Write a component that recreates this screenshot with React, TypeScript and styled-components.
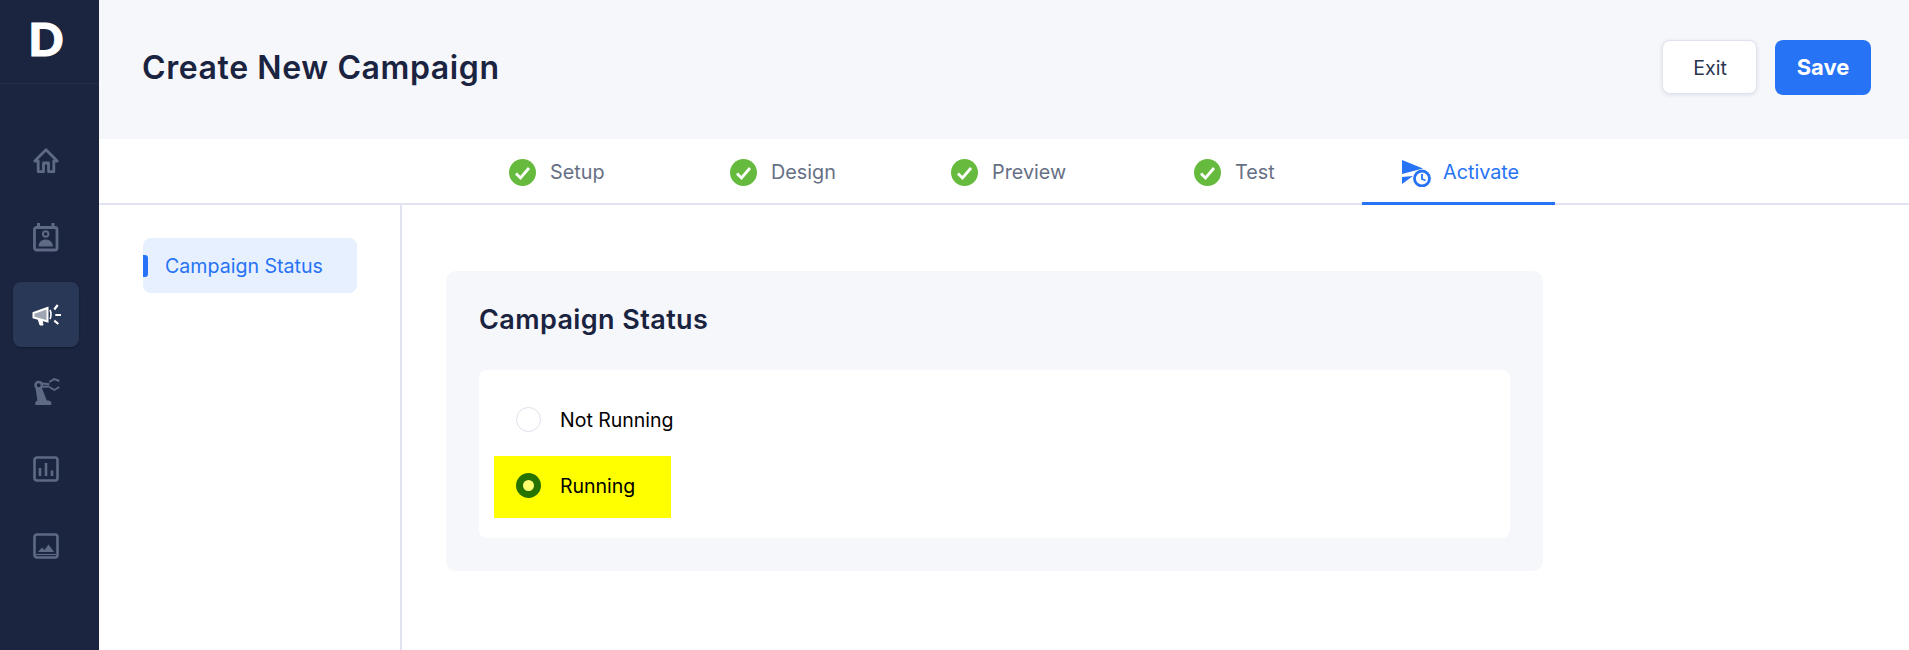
import React from 'react';
import styled, { createGlobalStyle } from 'styled-components';

const GlobalStyle = createGlobalStyle`
  html, body {
    margin: 0;
    padding: 0;
    height: 100%;
    background: #ffffff;
    font-family: Inter, "Liberation Sans", sans-serif;
  }
  #root {
    height: 100%;
  }
`;

const Page = styled.div`
  display: flex;
  height: 650px;
  overflow: hidden;
`;

const Sidebar = styled.aside`
  width: 99px;
  flex: none;
  display: flex;
  flex-direction: column;
  background-color: #1b2540;
`;

const LogoBox = styled.div`
  height: 83px;
  box-sizing: content-box;
  padding-right: 7px;
  display: flex;
  align-items: center;
  justify-content: center;
  border-bottom: 1px solid #222d4a;
`;

const Logo = styled.span`
  color: #ffffff;
  font-family: Lato, sans-serif;
  font-size: 46px;
  font-weight: 900;
  line-height: 1;
  margin-top: -5px;
  -webkit-text-stroke: 1.2px #ffffff;
`;

const SideNav = styled.nav`
  display: flex;
  flex-direction: column;
  align-items: flex-start;
  gap: 12px;
  padding: 44px 0 0 13px;
`;

const SideItem = styled.div<{ $active?: boolean }>`
  width: 66px;
  height: 65px;
  display: flex;
  align-items: center;
  justify-content: center;
  border-radius: 8px;
  color: ${(props) => (props.$active ? '#ffffff' : '#5e6984')};
  background-color: ${(props) => (props.$active ? '#2a3858' : 'transparent')};
  box-shadow: ${(props) => (props.$active ? '0 1px 2px rgba(10, 15, 35, 0.5)' : 'none')};
`;

const Main = styled.div`
  flex: 1;
  min-width: 0;
  display: flex;
  flex-direction: column;
`;

const TopBar = styled.header`
  height: 139px;
  flex: none;
  box-sizing: border-box;
  padding: 0 38px 5px 43px;
  display: flex;
  align-items: center;
  justify-content: space-between;
  background-color: #f6f7fb;
`;

const Title = styled.h1`
  margin: 0;
  color: #1a2340;
  font-size: 32px;
  font-weight: 600;
  letter-spacing: 0.6px;
`;

const Actions = styled.div`
  display: flex;
  align-items: center;
  gap: 18px;
`;

const ExitButton = styled.button`
  width: 95px;
  height: 54px;
  padding: 2px 0 0 1px;
  border: 1px solid #e1e4f0;
  border-radius: 8px;
  background-color: #ffffff;
  box-shadow: 0 1px 4px rgba(40, 50, 90, 0.12);
  color: #2c3550;
  font-family: inherit;
  font-size: 19.6px;
  font-weight: 400;
`;

const SaveButton = styled.button`
  width: 96px;
  height: 55px;
  border: none;
  border-radius: 8px;
  background-color: #2673f6;
  color: #ffffff;
  font-family: inherit;
  font-size: 22px;
  font-weight: 700;
`;

const Steps = styled.div`
  height: 66px;
  flex: none;
  box-sizing: border-box;
  padding-left: 370px;
  display: flex;
  border-bottom: 2px solid #e1e4f0;
`;

const Step = styled.div<{ $active?: boolean; $width: number }>`
  width: ${(props) => props.$width}px;
  flex: none;
  height: 66px;
  box-sizing: border-box;
  padding: 4px 0 0 40px;
  display: flex;
  align-items: center;
  gap: ${(props) => (props.$active ? '12px' : '14px')};
  font-size: 19.8px;
  color: ${(props) => (props.$active ? '#2673f6' : '#667085')};
  border-bottom: 3px solid ${(props) => (props.$active ? '#2673f6' : 'transparent')};
`;

const StepLabel = styled.span`
  margin-bottom: 2px;
`;

const Body = styled.div`
  flex: 1;
  min-height: 0;
  display: flex;
`;

const SectionNav = styled.div`
  width: 303px;
  flex: none;
  box-sizing: border-box;
  padding: 33px 0 0 44px;
  border-right: 2px solid #e1e4f0;
`;

const SectionLink = styled.div`
  position: relative;
  width: 214px;
  height: 55px;
  box-sizing: border-box;
  padding-left: 22px;
  display: flex;
  align-items: center;
  border-radius: 8px;
  background-color: #e7f0fe;
  color: #2673f6;
  font-size: 19.6px;

  &::before {
    content: '';
    position: absolute;
    left: 0;
    top: 17px;
    width: 5px;
    height: 22px;
    border-radius: 0 3px 3px 0;
    background-color: #2673f6;
  }
`;

const Content = styled.main`
  flex: 1;
  padding: 66px 0 0 44px;
`;

const Card = styled.section`
  width: 1097px;
  height: 300px;
  box-sizing: border-box;
  padding: 32px 33px;
  border-radius: 10px;
  background-color: #f6f7fb;
`;

const CardTitle = styled.h2`
  margin: 0 0 34px;
  height: 33px;
  line-height: 33px;
  color: #1a2340;
  font-size: 27px;
  font-weight: 600;
  letter-spacing: 0.4px;
`;

const Options = styled.div`
  display: flex;
  flex-direction: column;
  align-items: flex-start;
  gap: 4px;
  padding: 20px 15px;
  border-radius: 8px;
  background-color: #ffffff;
`;

const Option = styled.label<{ $highlight?: boolean }>`
  height: 62px;
  box-sizing: border-box;
  padding: 0 36px 2px 22px;
  display: flex;
  align-items: center;
  gap: 19px;
  color: #000000;
  font-size: 19.5px;
  font-weight: 400;
  background-color: ${(props) => (props.$highlight ? '#ffff00' : 'transparent')};
`;

const Radio = styled.span<{ $checked?: boolean }>`
  width: 25px;
  height: 25px;
  flex: none;
  box-sizing: border-box;
  margin-bottom: 1px;
  border-radius: 50%;
  border: ${(props) => (props.$checked ? '7px solid #267300' : '1px solid #dfe1ec')};
  background-color: ${(props) => (props.$checked ? '#ffff70' : '#ffffff')};
`;

const HomeIcon = () => (
  <svg width="28" height="26" viewBox="0 0 28 26" fill="none" stroke="currentColor" strokeWidth="2.8" strokeLinejoin="round">
    <path d="M14 1.800 2.800 13H6.200V23.700H11.500V15H16.500V23.700H21.800V13H25.200z" />
  </svg>
);

const ContactIcon = () => (
  <svg width="28" height="30" viewBox="0 0 28 30" fill="none" stroke="currentColor" strokeWidth="2.8">
    <rect x="2.500" y="4.500" width="22.500" height="22.500" rx="2" />
    <path d="M6.500 0v5M21 0v5" strokeWidth="3" />
    <circle cx="13.700" cy="11" r="2.700" strokeWidth="2" />
    <path d="M6.500 23.500c0-4.500 3.500-7 7.200-7s7.200 2.500 7.200 7z" fill="currentColor" stroke="none" />
  </svg>
);

const MegaphoneIcon = () => (
  <svg width="30" height="24" viewBox="0 0 30 24" fill="none" stroke="currentColor" strokeWidth="2">
    <path d="M2.500 10 16.500 5v13.500L2.500 14.500z" fill="rgba(255, 255, 255, 0.55)" />
    <path d="M7 15.500 9 22h3l-1-5" fill="currentColor" strokeWidth="1" />
    <path d="M19 7c1.300 2 1.300 7 0 9" strokeWidth="1.600" />
    <path d="M23.300 6.500 26.700 2M24.300 12H30M23.300 17.700l4 3.300" strokeWidth="2.200" />
  </svg>
);

const RobotIcon = () => (
  <svg width="27" height="27" viewBox="0 0 27 27" fill="none" stroke="currentColor" strokeWidth="1.9">
    <circle cx="5.700" cy="7.200" r="3.200" strokeWidth="2.400" />
    <path d="M2.500 10 4.500 23H14L8.700 9.500z" fill="currentColor" stroke="none" />
    <path d="M9 5.500l7.300 0.700M9.500 8.800l6.800-0.300" />
    <path d="M16.300 4 21.300 1l5 2M16.300 9l5 3 5-3" />
    <path d="M2.300 27V24l2-1.500h11.500L18.300 24v3z" fill="currentColor" stroke="none" />
  </svg>
);

const ChartIcon = () => (
  <svg width="26" height="26" viewBox="0 0 26 26" fill="none" stroke="currentColor" strokeWidth="2.6">
    <rect x="1.500" y="1.500" width="23" height="23" rx="2.500" />
    <path d="M7 12v8M13 7v13M19 14.500v5.500" />
  </svg>
);

const PictureIcon = () => (
  <svg width="26" height="26" viewBox="0 0 26 26" fill="none" stroke="currentColor" strokeWidth="2.6">
    <rect x="1.500" y="1.500" width="23" height="23" rx="2.500" />
    <path d="M5 19 9 14.500l2.500 2.500L15.500 11.500 21 19z" fill="currentColor" stroke="none" />
    <path d="M3 21.500h20" strokeWidth="1.200" />
  </svg>
);

const CheckIcon = () => (
  <svg width="27" height="27" viewBox="0 0 27 27">
    <circle cx="13.500" cy="13.500" r="13.500" fill="#66bb3f" />
    <path d="M7 14.500l4.500 4.500L20 9" fill="none" stroke="#ffffff" strokeWidth="2.800" />
  </svg>
);

const SendClockIcon = () => (
  <svg width="29" height="29" viewBox="0 0 29 29">
    <path d="M0 2 21 10.500 0 16z" fill="#2673f6" />
    <path d="M0 19 11 18 0 26z" fill="#2673f6" />
    <circle cx="20" cy="20.500" r="7.500" fill="#ffffff" stroke="#2673f6" strokeWidth="2.800" />
    <path d="M20 16v5l3.500 1.500" fill="none" stroke="#2673f6" strokeWidth="1.800" />
  </svg>
);

const sideItems = [
  { key: 'home', icon: <HomeIcon /> },
  { key: 'contacts', icon: <ContactIcon /> },
  { key: 'campaigns', icon: <MegaphoneIcon />, active: true },
  { key: 'automation', icon: <RobotIcon /> },
  { key: 'reports', icon: <ChartIcon /> },
  { key: 'media', icon: <PictureIcon /> },
];

const steps = [
  { label: 'Setup', width: 221 },
  { label: 'Design', width: 221 },
  { label: 'Preview', width: 243 },
  { label: 'Test', width: 208 },
];

const App: React.FC = () => {
  return (
    <Page>
      <GlobalStyle />
      <Sidebar>
        <LogoBox>
          <Logo>D</Logo>
        </LogoBox>
        <SideNav>
          {sideItems.map((item) => (
            <SideItem key={item.key} $active={item.active}>
              {item.icon}
            </SideItem>
          ))}
        </SideNav>
      </Sidebar>
      <Main>
        <TopBar>
          <Title>Create New Campaign</Title>
          <Actions>
            <ExitButton>Exit</ExitButton>
            <SaveButton>Save</SaveButton>
          </Actions>
        </TopBar>
        <Steps>
          {steps.map((step) => (
            <Step key={step.label} $width={step.width}>
              <CheckIcon />
              <StepLabel>{step.label}</StepLabel>
            </Step>
          ))}
          <Step $active $width={193}>
            <SendClockIcon />
            <StepLabel>Activate</StepLabel>
          </Step>
        </Steps>
        <Body>
          <SectionNav>
            <SectionLink>Campaign Status</SectionLink>
          </SectionNav>
          <Content>
            <Card>
              <CardTitle>Campaign Status</CardTitle>
              <Options>
                <Option>
                  <Radio />
                  Not Running
                </Option>
                <Option $highlight>
                  <Radio $checked />
                  Running
                </Option>
              </Options>
            </Card>
          </Content>
        </Body>
      </Main>
    </Page>
  );
};

export default App;
